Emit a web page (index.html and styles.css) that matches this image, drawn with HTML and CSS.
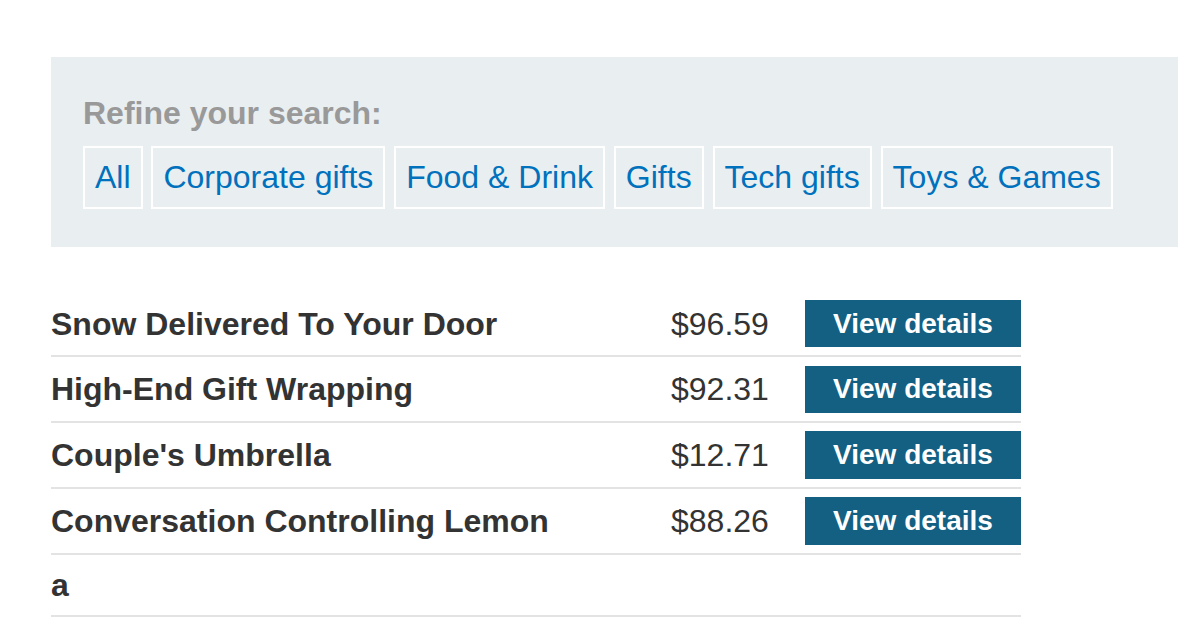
FILE: index.html
```html
<!DOCTYPE html>
<html lang="en">
<head>
<meta charset="utf-8">
<title>Products</title>
<link rel="stylesheet" href="styles.css">
</head>
<body>
<div class="page">
  <section class="refine">
    <h2 class="refine-title">Refine your search:</h2>
    <div class="filters">
      <a class="filter" href="#">All</a>
      <a class="filter" href="#">Corporate gifts</a>
      <a class="filter" href="#">Food &amp; Drink</a>
      <a class="filter" href="#">Gifts</a>
      <a class="filter" href="#">Tech gifts</a>
      <a class="filter" href="#">Toys &amp; Games</a>
    </div>
  </section>
  <table class="products">
    <tbody>
      <tr>
        <td class="name">Snow Delivered To Your Door</td>
        <td class="price">$96.59</td>
        <td class="action"><a class="btn" href="#">View details</a></td>
      </tr>
      <tr>
        <td class="name">High-End Gift Wrapping</td>
        <td class="price">$92.31</td>
        <td class="action"><a class="btn" href="#">View details</a></td>
      </tr>
      <tr>
        <td class="name">Couple's Umbrella</td>
        <td class="price">$12.71</td>
        <td class="action"><a class="btn" href="#">View details</a></td>
      </tr>
      <tr>
        <td class="name">Conversation Controlling Lemon</td>
        <td class="price">$88.26</td>
        <td class="action"><a class="btn" href="#">View details</a></td>
      </tr>
      <tr>
        <td class="name">a</td>
        <td class="price"></td>
        <td class="action"></td>
      </tr>
    </tbody>
  </table>
</div>
</body>
</html>
```

FILE: styles.css
```css
html, body {
  margin: 0;
  padding: 0;
  background: #ffffff;
}

body {
  font-family: "Liberation Sans", Arial, sans-serif;
  font-size: 32px;
  color: #333333;
  overflow: hidden;
}

.page {
  padding: 57px 0 0 51px;
}

.refine {
  background: #e9eef1;
  padding: 38px 32px 38px 32px;
}

.refine-title {
  margin: 0 0 14.5px 0;
  font-size: 32px;
  line-height: 36px;
  font-weight: 700;
  color: #999999;
}

.filters {
  display: flex;
  gap: 8.9px;
}

.filter {
  display: block;
  border: 2px solid #ffffff;
  padding: 7.6px 10px;
  line-height: 44px;
  color: #0071bc;
  text-decoration: none;
  white-space: nowrap;
}

.products {
  margin-top: 45px;
  width: 970px;
  border-collapse: collapse;
  border-spacing: 0;
}

.products td {
  padding: 8.2px 0;
  border-bottom: 2px solid #e3e3e3;
  line-height: 44px;
  vertical-align: middle;
}

.name {
  font-weight: 700;
  text-align: left;
}

.price {
  width: 134px;
  white-space: nowrap;
}

.action {
  width: 216px;
}

.btn {
  display: flex;
  align-items: center;
  justify-content: center;
  height: 47.4px;
  width: 216px;
  background: #136083;
  color: #ffffff;
  font-weight: 700;
  font-size: 28px;
  text-decoration: none;
}
```
